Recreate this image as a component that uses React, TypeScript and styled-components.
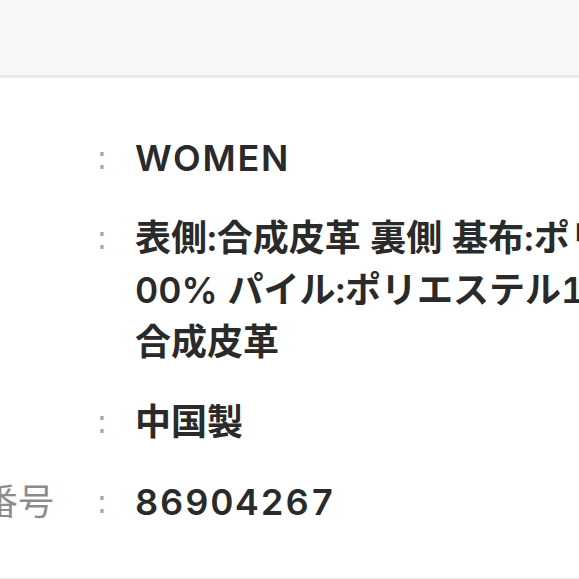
import React from 'react';
import styled, { createGlobalStyle } from 'styled-components';

const GlobalStyle = createGlobalStyle`
  html, body {
    margin: 0;
    padding: 0;
    background: #ffffff;
    overflow: hidden;
  }
  body {
    font-family: Inter, "Noto Sans CJK JP", sans-serif;
    -webkit-font-smoothing: antialiased;
  }
`;

const Page = styled.div`
  width: 579px;
  height: 579px;
  overflow: hidden;
`;

const TopBar = styled.header`
  height: 74px;
  background: #f7f7f7;
  border-bottom: 1px solid #fbfbfb;
`;

const Rule = styled.div`
  height: 3px;
  background: #e9e9e9;
`;

const SpecTable = styled.dl`
  display: grid;
  grid-template-columns: 184px 16px 1fr;
  margin: 0 0 0 -90px;
  padding: 40px 0 36px;
  border-bottom: 1px solid #ececec;
  font-size: 36px;
  line-height: 52px;
`;

const Label = styled.dt`
  margin: 0;
  padding: 14px 0;
  color: #8c8c8c;
  font-weight: 400;
  white-space: nowrap;
`;

const Colon = styled.span`
  padding: 14px 0;
  text-align: center;
  color: #a8a8a8;
  font-family: "DejaVu Sans", sans-serif;
  font-size: 32px;
`;

const Value = styled.dd<{ $latin?: boolean }>`
  margin: 0;
  padding: 14px 0 14px 25px;
  color: #2a2a2a;
  font-weight: 600;
  white-space: pre;
  font-variant-numeric: tabular-nums;
  letter-spacing: ${(props) => (props.$latin ? '0.05em' : '0')};
`;

interface ISpec {
  label: string;
  value: string;
  latin?: boolean;
}

const specs: ISpec[] = [
  { label: '性別', value: 'WOMEN', latin: true },
  {
    label: '素材',
    value: '表側:合成皮革 裏側 基布:ポリエステル1\n00% パイル:ポリエステル100% 底:\n合成皮革',
  },
  { label: '原産国', value: '中国製' },
  { label: '商品番号', value: '86904267', latin: true },
];

const App = () => {
  return (
    <Page>
      <GlobalStyle />
      <TopBar />
      <Rule />
      <SpecTable>
        {specs.map((spec) => (
          <React.Fragment key={spec.label}>
            <Label>{spec.label === '商品番号' ? spec.label : ''}</Label>
            <Colon>:</Colon>
            <Value $latin={spec.latin}>{spec.value}</Value>
          </React.Fragment>
        ))}
      </SpecTable>
    </Page>
  );
};

export default App;
